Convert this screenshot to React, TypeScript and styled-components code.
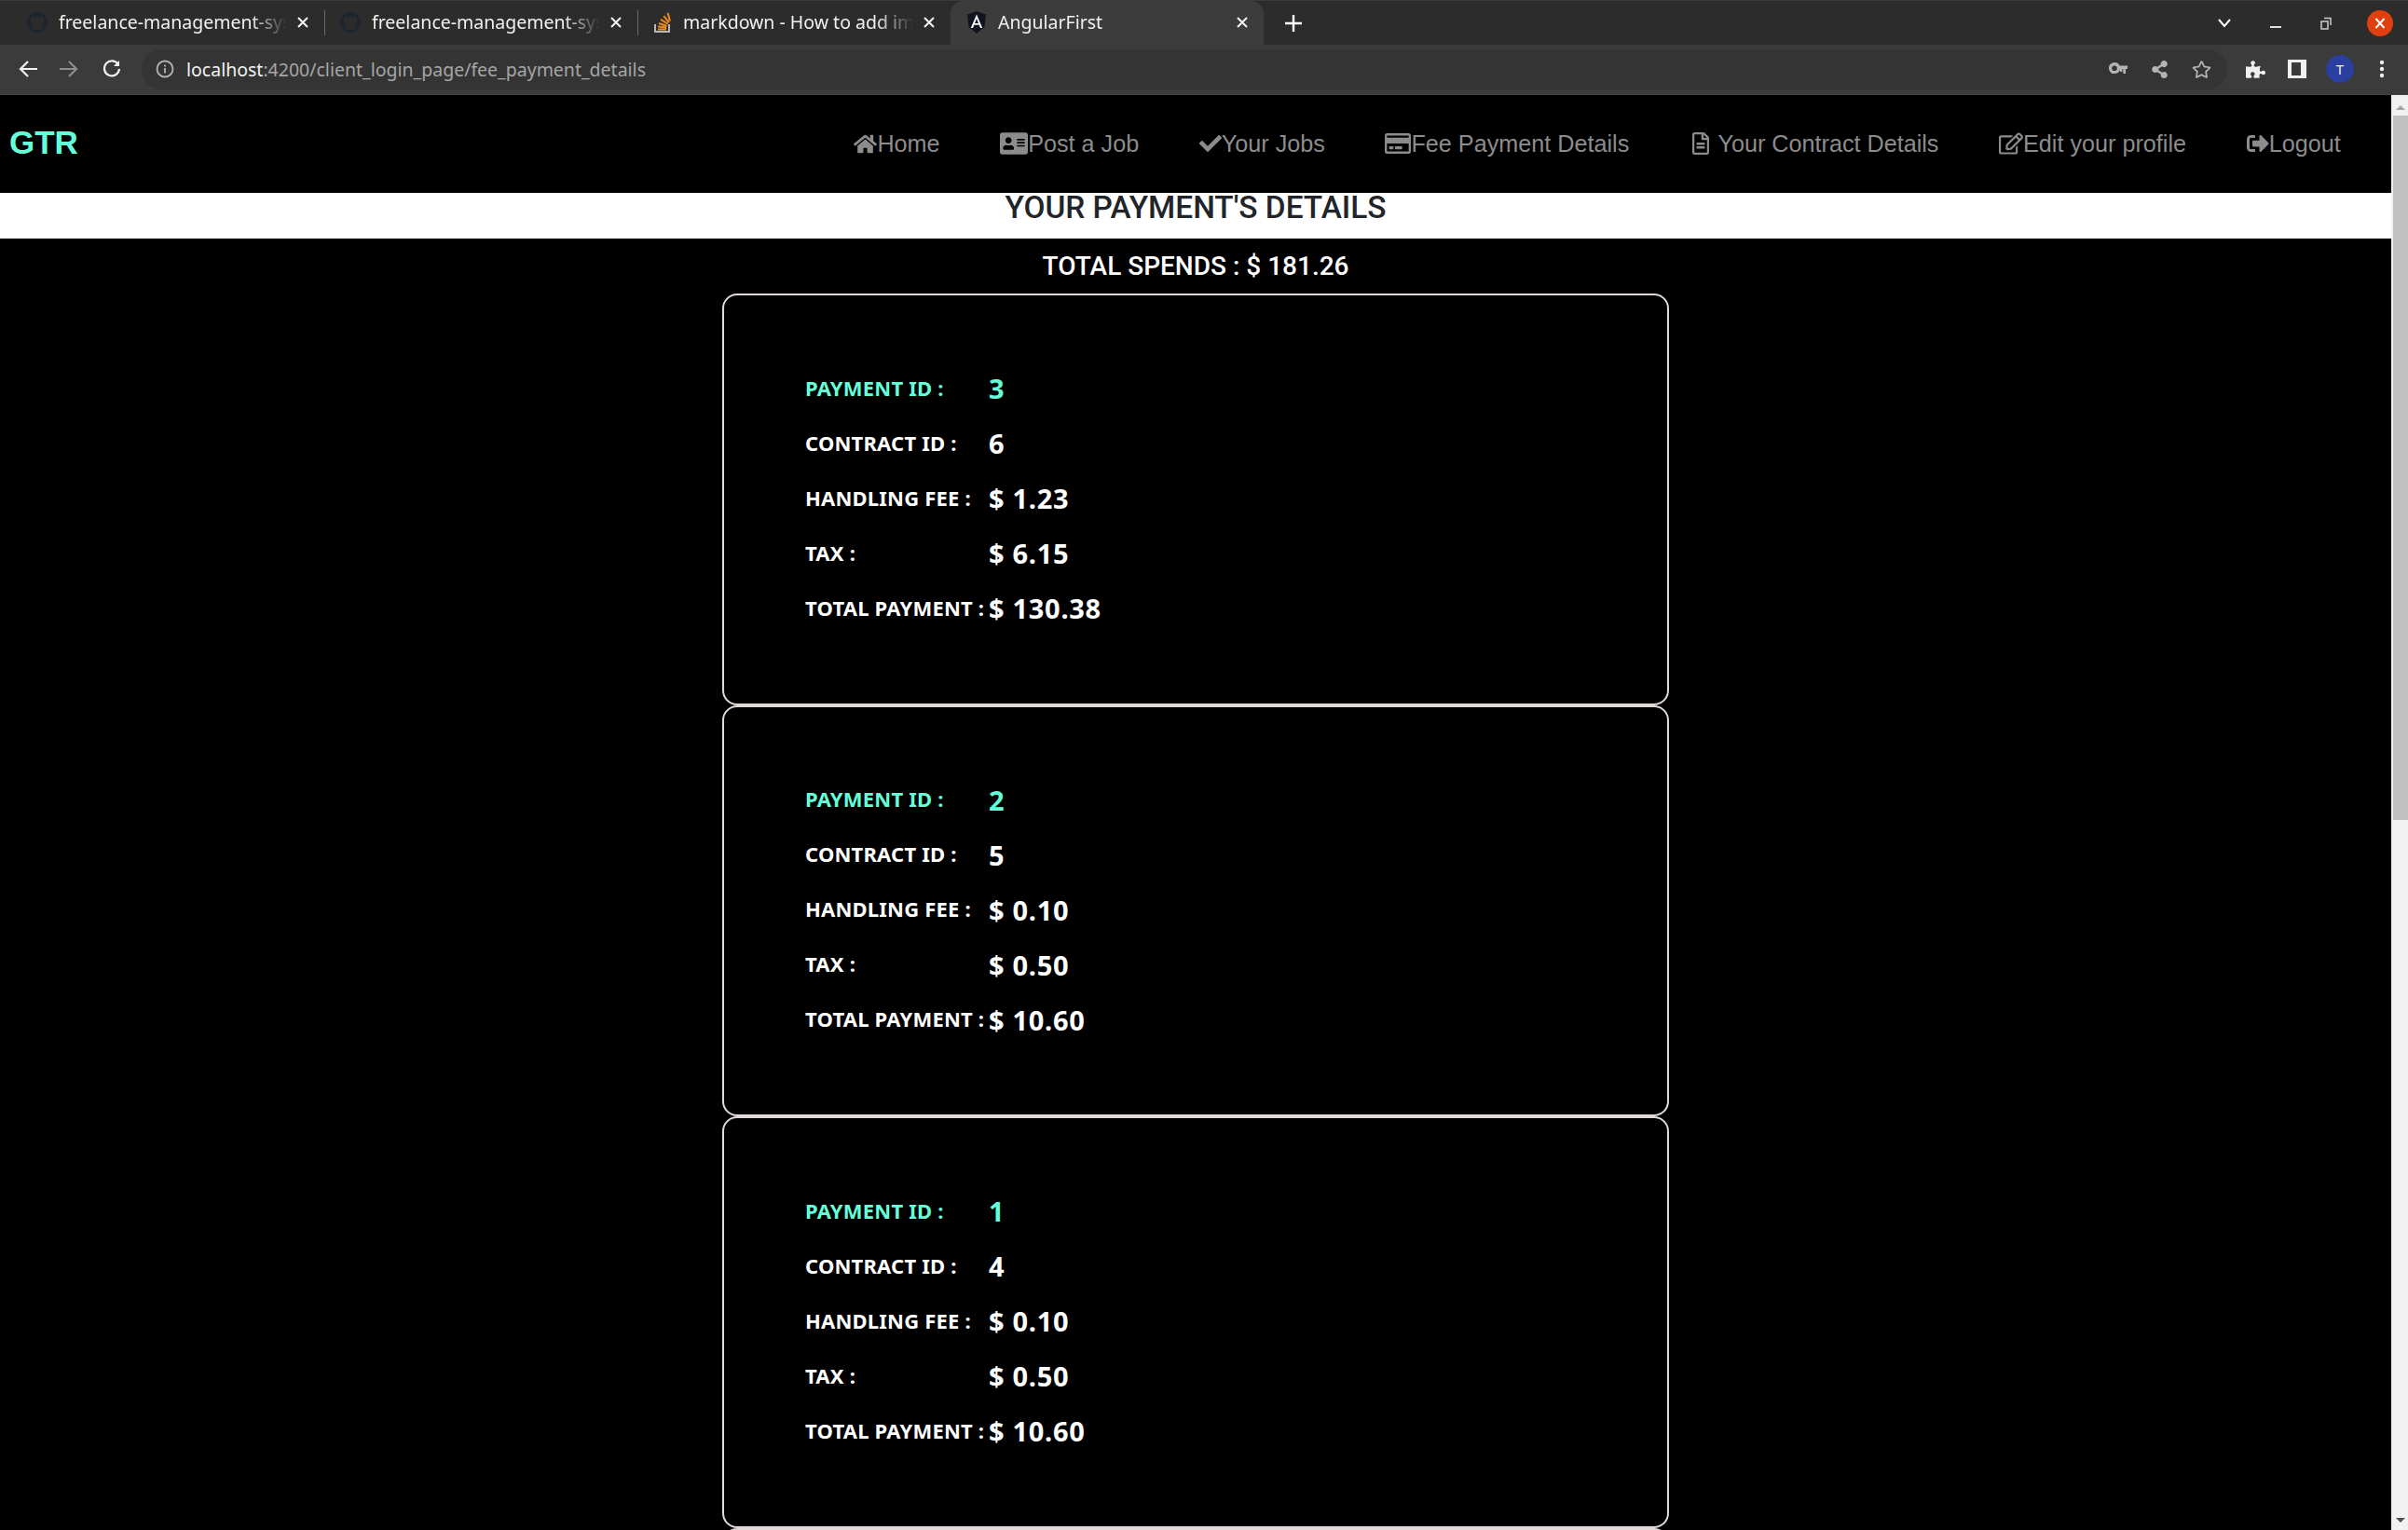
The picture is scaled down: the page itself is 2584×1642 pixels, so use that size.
import React from 'react';
import styled, { createGlobalStyle } from 'styled-components';
import { FaHome, FaAddressCard, FaCheck, FaRegCreditCard, FaRegFileAlt, FaRegEdit, FaSignOutAlt, FaShareAlt, FaRegStar, FaPuzzlePiece } from 'react-icons/fa';

const GlobalStyle = createGlobalStyle`
  html, body {
    margin: 0;
    height: 100%;
    overflow: hidden;
    background: #000;
  }
`;

const Screen = styled.div`
  width: 2584px;
  height: 1642px;
  display: flex;
  flex-direction: column;
  overflow: hidden;
  font-family: 'Noto Sans', sans-serif;
`;

const TabStrip = styled.div`
  height: 48px;
  flex: none;
  display: flex;
  align-items: stretch;
  padding-left: 12px;
  background: #2c2c2c;
  border-top: 1px solid #3a3a3a;
  box-sizing: border-box;
`;

const Tab = styled.div<{ $active?: boolean }>`
  width: 336px;
  box-sizing: border-box;
  display: flex;
  align-items: center;
  gap: 11px;
  padding: 0 17px 2px 16px;
  color: #f0f0f0;
  background: ${p => (p.$active ? '#3c3c3c' : 'transparent')};
  border-radius: ${p => (p.$active ? '14px 14px 0 0' : '0')};
`;

const TabDivider = styled.div`
  width: 1px;
  margin: 10px -1px 10px 0;
  background: #6a6a6a;
`;

const TabTitle = styled.span`
  flex: 1;
  min-width: 0;
  overflow: hidden;
  white-space: nowrap;
  font-size: 19.5px;
  mask-image: linear-gradient(to right, #000 84%, transparent 100%);
`;

const TabClose = styled.svg`
  width: 12px;
  height: 12px;
  flex: none;
  stroke: #f4f4f4;
  stroke-width: 2;
`;

const NewTab = styled.svg`
  width: 18px;
  height: 18px;
  margin: auto 0 auto 23px;
  stroke: #fff;
  stroke-width: 2.4;
`;

const WindowControls = styled.div`
  margin-left: auto;
  display: flex;
  align-items: center;
  gap: 42px;
  padding-right: 16px;
  color: #eee;
`;

const CloseCircle = styled.div`
  width: 28px;
  height: 28px;
  margin-left: -4px;
  border-radius: 50%;
  background: #e0400f;
  display: flex;
  align-items: center;
  justify-content: center;
`;

const ToolBar = styled.div`
  height: 54px;
  flex: none;
  box-sizing: border-box;
  display: flex;
  align-items: center;
  background: #3b3b3b;
  padding: 0 0 1px 20px;
  border-bottom: 1px solid #454545;
`;

const NavGroup = styled.div`
  display: flex;
  align-items: center;
  gap: 24px;
  width: 132px;
  flex: none;
`;

const AddressBar = styled.div`
  width: 2238px;
  height: 43px;
  flex: none;
  border-radius: 22px;
  background: #343434;
  display: flex;
  align-items: center;
  padding: 0 17px 0 15px;
  box-sizing: border-box;
  font-size: 19.5px;
`;

const UrlHost = styled.span`
  color: #f2f2f2;
  margin-left: 13px;
`;

const UrlPath = styled.span`
  color: #a6a6a6;
`;

const AddressIcons = styled.div`
  margin-left: auto;
  display: flex;
  align-items: center;
  gap: 25px;
  color: #b4b4b4;
`;

const ToolIcons = styled.div`
  display: flex;
  align-items: center;
  gap: 24px;
  margin-left: 20px;
  color: #f0f0f0;
`;

const Avatar = styled.div`
  width: 30px;
  height: 30px;
  margin: 0 3px 0 -3px;
  border-radius: 50%;
  background: #2a3f9e;
  color: #eee;
  font-size: 15px;
  display: flex;
  align-items: center;
  justify-content: center;
`;

const Viewport = styled.div`
  flex: 1;
  min-height: 0;
  display: flex;
`;

const Page = styled.div`
  flex: 1;
  min-width: 0;
  overflow: hidden;
  background: #000;
`;

const Scrollbar = styled.div`
  width: 18px;
  flex: none;
  background: #f1f1f1;
  display: flex;
  flex-direction: column;
  align-items: flex-end;
`;

const ScrollThumb = styled.div`
  width: 16px;
  height: 756px;
  background: #c0c0c0;
`;

const ScrollArrow = styled.div<{ $down?: boolean }>`
  height: 22px;
  width: 16px;
  flex: none;
  display: flex;
  align-items: center;
  justify-content: center;
  padding-top: ${p => (p.$down ? '0' : '4px')};
  box-sizing: border-box;
  margin-top: ${p => (p.$down ? 'auto' : '0')};
  &::before {
    content: '';
    border-left: 5px solid transparent;
    border-right: 5px solid transparent;
    ${p => (p.$down ? 'border-top: 5px solid #505050;' : 'border-bottom: 5px solid #a3a3a3;')}
  }
`;

const NavBar = styled.nav`
  height: 105px;
  display: flex;
  align-items: center;
  justify-content: space-between;
  padding: 0 10px;
  box-sizing: border-box;
`;

const Brand = styled.a`
  font-family: 'Liberation Sans', sans-serif;
  font-size: 35px;
  font-weight: 700;
  color: #64ffda;
  margin-top: -3px;
`;

const NavList = styled.ul`
  display: flex;
  list-style: none;
  margin: -1px 0 0;
  padding: 0 12px 0 0;
`;

const NavLink = styled.li`
  display: flex;
  align-items: center;
  padding: 0 32.3px;
  font-family: 'Liberation Sans', sans-serif;
  font-size: 25.2px;
  color: #8c8c8c;
  white-space: pre;
  svg {
    flex: none;
  }
`;

const TitleBand = styled.h1`
  margin: 0;
  height: 49px;
  background: #fff;
  color: #212529;
  text-align: center;
  font-family: Roboto, sans-serif;
  font-weight: 500;
  font-size: 33.4px;
  line-height: 32px;
  text-transform: uppercase;
`;

const TotalLine = styled.h2`
  margin: 0;
  height: 59px;
  color: #fff;
  text-align: center;
  font-family: Roboto, sans-serif;
  font-weight: 500;
  font-size: 28px;
  line-height: 60px;
`;

const CardStack = styled.div`
  width: 1016px;
  margin: 0 auto;
  display: flex;
  flex-direction: column;
`;

const Card = styled.section`
  height: 441.67px;
  flex: none;
  box-sizing: border-box;
  border: 2px solid #e2d9d9;
  border-radius: 16px;
  padding: 70px 0 0 87px;
`;

const Row = styled.div<{ $accent?: boolean }>`
  display: grid;
  grid-template-columns: 197px auto;
  align-items: center;
  justify-content: start;
  height: 59px;
  color: ${p => (p.$accent ? '#64ffda' : '#fff')};
`;

const Label = styled.span`
  font-size: 22px;
  font-weight: 700;
  letter-spacing: 0.2px;
  white-space: nowrap;
  margin-top: -2px;
`;

const Value = styled.span`
  font-size: 29px;
  font-weight: 700;
  letter-spacing: 0.7px;
  white-space: nowrap;
`;

const payments = [
  { id: 3, contract: 6, fee: '1.23', tax: '6.15', total: '130.38' },
  { id: 2, contract: 5, fee: '0.10', tax: '0.50', total: '10.60' },
  { id: 1, contract: 4, fee: '0.10', tax: '0.50', total: '10.60' }
];

const links = [
  { text: 'Home', icon: <FaHome size={25} /> },
  { text: 'Post a Job', icon: <FaAddressCard size={30} /> },
  { text: 'Your Jobs', icon: <FaCheck size={24} /> },
  { text: 'Fee Payment Details', icon: <FaRegCreditCard size={28} /> },
  { text: ' Your Contract Details', icon: <FaRegFileAlt size={24} /> },
  { text: 'Edit your profile', icon: <FaRegEdit size={26} /> },
  { text: 'Logout', icon: <FaSignOutAlt size={24} /> }
];

const tabs = [
  { title: 'freelance-management-system', icon: 'github' },
  { title: 'freelance-management-system', icon: 'github' },
  { title: 'markdown - How to add image', icon: 'so' },
  { title: 'AngularFirst', icon: 'angular', active: true }
];

const Favicon = ({ kind }: { kind: string }) => {
  if (kind === 'github') {
    return (
      <svg width="24" height="24" viewBox="0 0 24 24" style={{ flex: 'none' }}>
        <circle cx="12" cy="12" r="11" fill="#1d2530" />
        <path d="M7 20v-3c-2 0-3-1-3-1 2 0 2 1 3 1 0-2 1-2 1-2-2-1-3-2-3-5 0-1 1-2 1-3V5l3 1h6l3-1v2c0 1 1 2 1 3 0 3-1 4-3 5 0 0 1 0 1 2v3z" fill="#2c2c2c" />
      </svg>
    );
  }
  if (kind === 'so') {
    return (
      <svg width="22" height="24" viewBox="0 0 22 24" style={{ flex: 'none' }}>
        <path d="M3 14v8h15v-8" fill="none" stroke="#b8b8b8" strokeWidth="2" />
        <path d="M6 18.5h9v2H6zM6.3 15.5l9 1.2-.3 1.9-9-1.2zM7.4 12l8.5 3-.7 1.9-8.5-3zM9.5 8l7.6 4.8-1 1.7-7.6-4.8zM13 4.5l5.7 7-1.5 1.2-5.7-7zM17.5 1.5l2.4 8.7-1.9.5-2.4-8.7z" fill="#f28a1e" />
      </svg>
    );
  }
  return (
    <svg width="24" height="24" viewBox="0 0 24 24" style={{ flex: 'none' }}>
      <path d="M12 0l10 3.5-1.6 13.6L12 24l-8.4-6.9L2 3.5z" fill="#11141f" />
      <path d="M12 3.5L5.8 18h2.3l1.2-3.2h5.4l1.2 3.2h2.3zm0 4.6l1.9 4.8h-3.8z" fill="#fff" />
    </svg>
  );
};

const Chrome = () => (
  <>
    <TabStrip>
      {tabs.map((t, i) => (
        <React.Fragment key={i}>
          <Tab $active={t.active}>
            <Favicon kind={t.icon} />
            <TabTitle>{t.title}</TabTitle>
            <TabClose viewBox="0 0 12 12">
              <path d="M1 1l10 10M11 1L1 11" />
            </TabClose>
          </Tab>
          {i < 2 && <TabDivider />}
        </React.Fragment>
      ))}
      <NewTab viewBox="0 0 18 18">
        <path d="M9 0v18M0 9h18" />
      </NewTab>
      <WindowControls>
        <svg width="14" height="10" viewBox="0 0 14 10" fill="none" stroke="#fff" strokeWidth="2">
          <path d="M1 1l6 7 6-7" />
        </svg>
        <svg width="12" height="12" viewBox="0 0 12 12" stroke="#ddd" strokeWidth="2">
          <path d="M0 10h12" />
        </svg>
        <svg width="12" height="14" viewBox="0 0 12 14" fill="none" stroke="#ccc" strokeWidth="1.5">
          <path d="M1 5h7v8H1zM4 1.5h7V9" />
        </svg>
        <CloseCircle>
          <svg width="12" height="12" viewBox="0 0 12 12" stroke="#fff" strokeWidth="2">
            <path d="M1.5 1l9 10M10.5 1l-9 10" />
          </svg>
        </CloseCircle>
      </WindowControls>
    </TabStrip>
    <ToolBar>
      <NavGroup>
        <svg width="20" height="18" viewBox="0 0 20 18" fill="none" stroke="#f2f2f2" strokeWidth="2.2">
          <path d="M20 9H2M10 1L2 9l8 8" />
        </svg>
        <svg width="20" height="18" viewBox="0 0 20 18" fill="none" stroke="#8e8e8e" strokeWidth="2.2">
          <path d="M0 9h18M10 1l8 8-8 8" />
        </svg>
        <svg width="20" height="20" viewBox="0 0 20 20" fill="none" stroke="#f2f2f2" strokeWidth="2.2" style={{ marginLeft: 2 }}>
          <path d="M17 5.5A8 8 0 1 0 18 10" />
          <path d="M18 1v6h-6" fill="#f2f2f2" stroke="none" />
        </svg>
      </NavGroup>
      <AddressBar>
        <svg width="20" height="20" viewBox="0 0 20 20" fill="none" stroke="#b4b4b4" strokeWidth="1.8" style={{ flex: 'none' }}>
          <circle cx="10" cy="10" r="8.5" />
          <path d="M10 9v5.5M10 5.5v2" />
        </svg>
        <UrlHost>localhost</UrlHost>
        <UrlPath>:4200/client_login_page/fee_payment_details</UrlPath>
        <AddressIcons>
          <svg width="20" height="14" viewBox="0 0 20 14" fill="#b4b4b4">
            <path d="M6 0a6 6 0 1 1-5.6 8.2A6 6 0 0 1 6 0zm0 3.4a2.8 2.8 0 1 0 0 5.6 2.8 2.8 0 0 0 0-5.6z" fillRule="evenodd" />
            <path d="M11 3.5h9v3.6h-2V12h-2.6V7.1h-1V10H12V7.1h-1z" />
          </svg>
          <FaShareAlt size={19} />
          <FaRegStar size={21} />
        </AddressIcons>
      </AddressBar>
      <ToolIcons>
        <FaPuzzlePiece size={21} />
        <svg width="20" height="20" viewBox="0 0 20 20" fill="#f0f0f0">
          <path d="M0 0h20v20H0zM4 3v14h10V3z" fillRule="evenodd" />
        </svg>
        <Avatar>T</Avatar>
        <svg width="6" height="20" viewBox="0 0 6 20" fill="#eee">
          <circle cx="3" cy="3" r="2.2" />
          <circle cx="3" cy="10" r="2.2" />
          <circle cx="3" cy="17" r="2.2" />
        </svg>
      </ToolIcons>
    </ToolBar>
  </>
);

export default function App() {
  return (
    <Screen>
      <GlobalStyle />
      <Chrome />
      <Viewport>
        <Page>
          <NavBar>
            <Brand>GTR</Brand>
            <NavList>
              {links.map(l => (
                <NavLink key={l.text}>
                  {l.icon}
                  {l.text}
                </NavLink>
              ))}
            </NavList>
          </NavBar>
          <TitleBand>Your Payment's Details</TitleBand>
          <TotalLine>TOTAL SPENDS : $ 181.26</TotalLine>
          <CardStack>
            {payments.map(p => (
              <Card key={p.id}>
                <Row $accent>
                  <Label>PAYMENT ID :</Label>
                  <Value>{p.id}</Value>
                </Row>
                <Row>
                  <Label>CONTRACT ID :</Label>
                  <Value>{p.contract}</Value>
                </Row>
                <Row>
                  <Label>HANDLING FEE :</Label>
                  <Value>$ {p.fee}</Value>
                </Row>
                <Row>
                  <Label>TAX :</Label>
                  <Value>$ {p.tax}</Value>
                </Row>
                <Row>
                  <Label>TOTAL PAYMENT :</Label>
                  <Value>$ {p.total}</Value>
                </Row>
              </Card>
            ))}
            <Card />
          </CardStack>
        </Page>
        <Scrollbar>
          <ScrollArrow />
          <ScrollThumb />
          <ScrollArrow $down />
        </Scrollbar>
      </Viewport>
    </Screen>
  );
}
